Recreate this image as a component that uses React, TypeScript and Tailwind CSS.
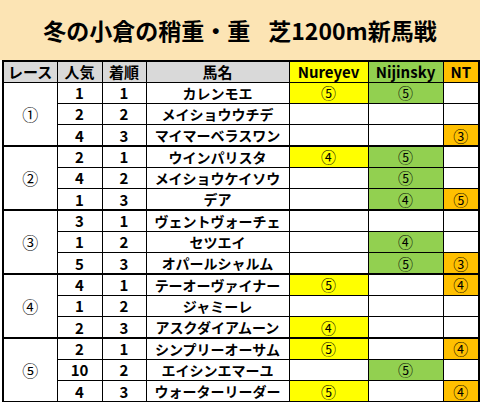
import React from "react";

type Row = [string, string, string, string, string, string];

const races: { no: string; rows: Row[] }[] = [
  {
    no: "①",
    rows: [
      ["1", "1", "カレンモエ", "⑤", "⑤", ""],
      ["2", "2", "メイショウウチデ", "", "", ""],
      ["4", "3", "マイマーベラスワン", "", "", "③"],
    ],
  },
  {
    no: "②",
    rows: [
      ["2", "1", "ウインパリスタ", "④", "⑤", ""],
      ["4", "2", "メイショウケイソウ", "", "⑤", ""],
      ["1", "3", "デア", "", "④", "⑤"],
    ],
  },
  {
    no: "③",
    rows: [
      ["3", "1", "ヴェントヴォーチェ", "", "", ""],
      ["1", "2", "セツエイ", "", "④", ""],
      ["5", "3", "オパールシャルム", "", "⑤", "③"],
    ],
  },
  {
    no: "④",
    rows: [
      ["4", "1", "テーオーヴァイナー", "⑤", "", "④"],
      ["1", "2", "ジャミーレ", "", "", ""],
      ["2", "3", "アスクダイアムーン", "④", "", ""],
    ],
  },
  {
    no: "⑤",
    rows: [
      ["2", "1", "シンプリーオーサム", "⑤", "", "④"],
      ["10", "2", "エイシンエマーユ", "", "⑤", ""],
      ["4", "3", "ウォーターリーダー", "⑤", "", "④"],
    ],
  },
];

const font = { fontFamily: '"Noto Sans CJK JP", "Noto Sans", sans-serif' };

export default function App() {
  return (
    <div className="w-[480px] h-[402px] bg-white overflow-hidden" style={font}>
      {/* title band */}
      <div className="h-[60px] bg-[#fce4b4] flex items-center justify-center">
        <h1 className="text-[23px] font-bold text-black leading-none">
          冬の小倉の稍重・重<span className="ml-[18px]">芝1200m新馬戦</span>
        </h1>
      </div>

      <table className="ml-[2px] w-[476px] table-fixed border-collapse border-2 border-black text-[14px] font-bold text-black leading-none">
        <colgroup>
          <col className="w-[54px]" />
          <col className="w-[45px]" />
          <col className="w-[44px]" />
          <col className="w-[143px]" />
          <col className="w-[79px]" />
          <col className="w-[75px]" />
          <col className="w-[36px]" />
        </colgroup>
        <thead>
          <tr className="h-[21px] text-[15px]">
            <th className="border border-black bg-[#d9d9d9] font-bold">レース</th>
            <th className="border border-black bg-[#d9d9d9] font-bold">人気</th>
            <th className="border border-black bg-[#d9d9d9] font-bold">着順</th>
            <th className="border border-black bg-[#d9d9d9] font-bold">馬名</th>
            <th className="border border-black bg-[#ffff00] font-bold">Nureyev</th>
            <th className="border border-black bg-[#92d050] font-bold">Nijinsky</th>
            <th className="border border-black bg-[#ffc000] font-bold">NT</th>
          </tr>
        </thead>
        <tbody>
          {races.map((race, gi) =>
            race.rows.map((r, i) => {
              const top = i === 0 && gi > 0 ? "border-t-2" : "";
              return (
                <tr key={`${gi}-${i}`} className="h-[21.33px]">
                  {i === 0 && (
                    <td
                      rowSpan={3}
                      className={`border border-black text-center text-[16px] font-normal ${top}`}
                    >
                      {race.no}
                    </td>
                  )}
                  <td className={`border border-black text-center text-[15px] ${top}`}>{r[0]}</td>
                  <td className={`border border-black text-center text-[15px] ${top}`}>{r[1]}</td>
                  <td className={`border border-black text-center whitespace-nowrap ${top}`}>
                    {r[2]}
                  </td>
                  <td
                    className={`border border-black text-center font-normal text-[15px] ${top} ${
                      r[3] ? "bg-[#ffff00]" : ""
                    }`}
                  >
                    {r[3]}
                  </td>
                  <td
                    className={`border border-black text-center font-normal text-[15px] ${top} ${
                      r[4] ? "bg-[#92d050]" : ""
                    }`}
                  >
                    {r[4]}
                  </td>
                  <td
                    className={`border border-black text-center font-normal text-[15px] ${top} ${
                      r[5] ? "bg-[#ffc000]" : ""
                    }`}
                  >
                    {r[5]}
                  </td>
                </tr>
              );
            })
          )}
        </tbody>
      </table>
    </div>
  );
}
